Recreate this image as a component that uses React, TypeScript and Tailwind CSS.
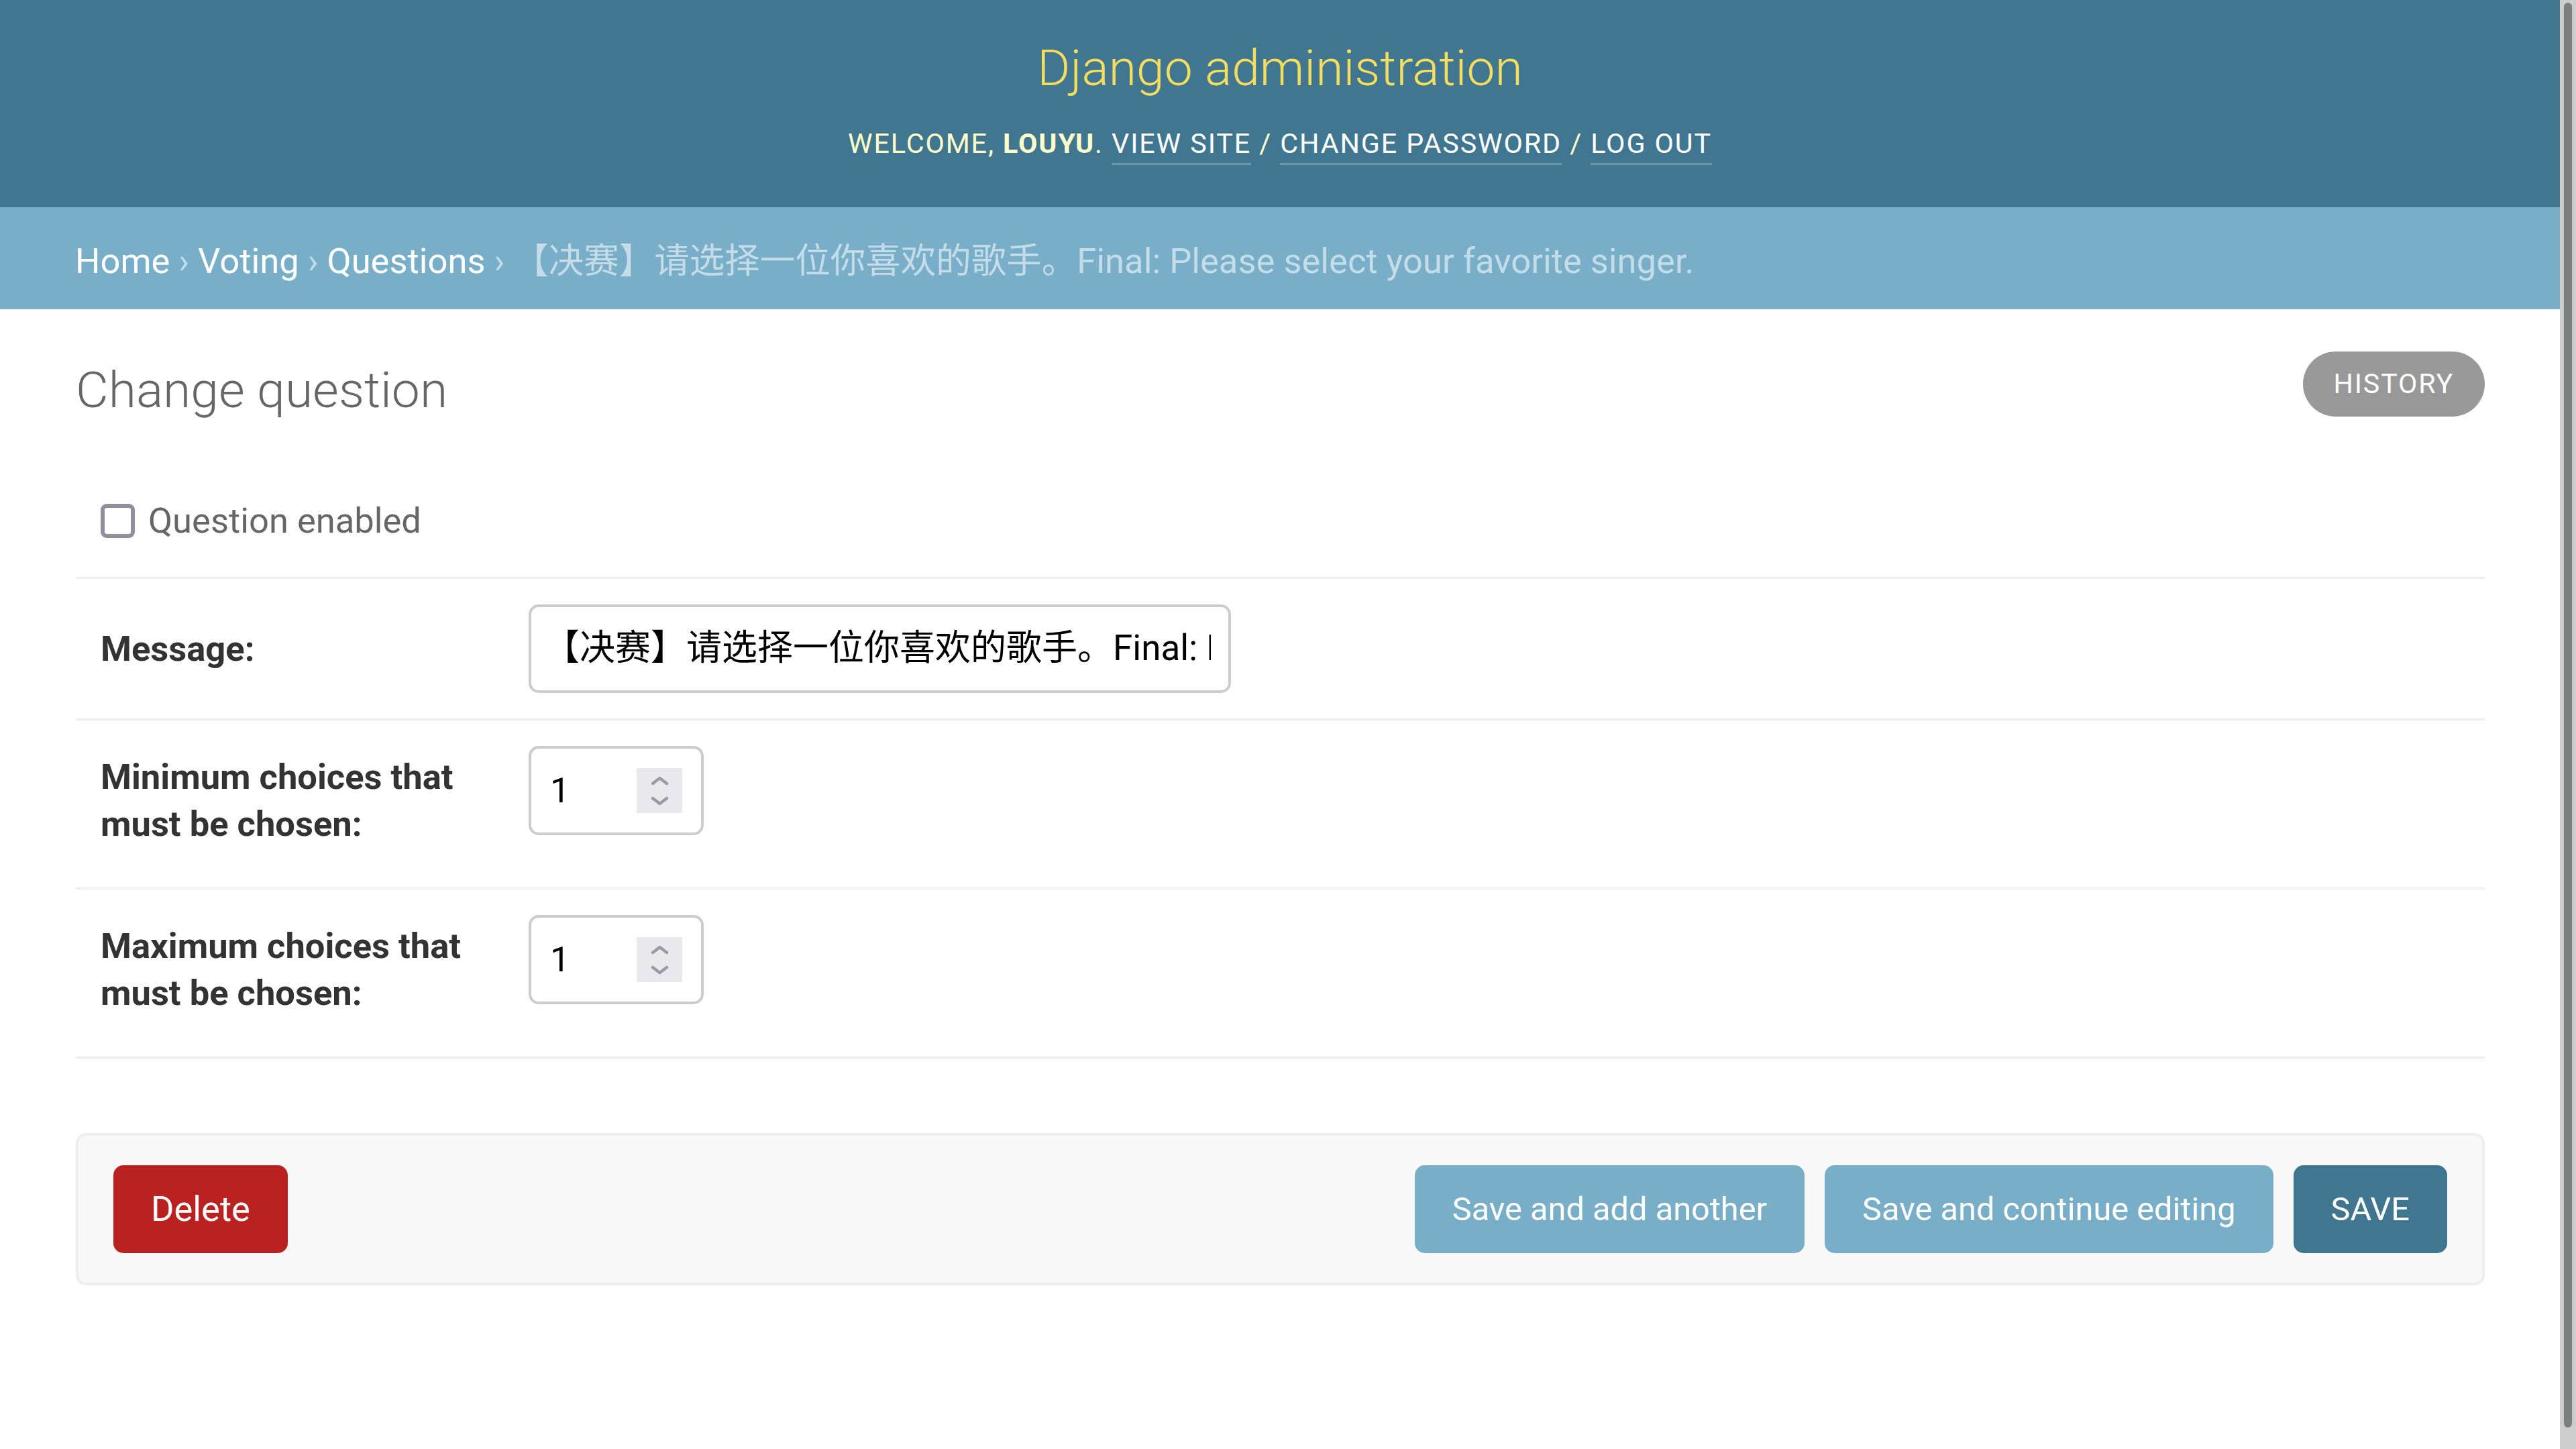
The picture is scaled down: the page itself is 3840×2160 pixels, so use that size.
import React from 'react';

const MESSAGE = '【决赛】请选择一位你喜欢的歌手。Final: Please select your favorite singer.';

function Chevron({ down }: { down?: boolean }) {
  return (
    <svg width="27" height="14" viewBox="0 0 27 14" fill="none">
      <path
        d={down ? 'M3 3L13.5 11L24 3' : 'M3 11L13.5 3L24 11'}
        stroke="#9a9aa6"
        strokeWidth="4.5"
        strokeLinecap="round"
        strokeLinejoin="round"
      />
    </svg>
  );
}

function NumberField({ value }: { value: string }) {
  return (
    <div className="flex h-[133px] w-[261px] shrink-0 items-center justify-between rounded-[15px] border-[4px] border-[#cccccc] bg-white pl-[28px] pr-[28px]">
      <span className="text-[52.5px] leading-none text-black">{value}</span>
      <div className="flex h-[67px] w-[68px] flex-col items-center justify-center gap-[16px] bg-[#e9e9ed]">
        <Chevron />
        <Chevron down />
      </div>
    </div>
  );
}

// two-line labels sit at the top of the row
function NumberRow({ label }: { label: string }) {
  return (
    <div className="flex items-start border-b-[3px] border-[#eeeeee] px-[37px] py-[38px]">
      <label className="w-[638px] shrink-0 pb-[22px] pr-[38px] pt-[11px] text-[52.5px] font-bold leading-[70px] text-[#333333]">
        {label}
      </label>
      <NumberField value="1" />
    </div>
  );
}

function Button({ children, className }: { children: React.ReactNode; className: string }) {
  return (
    <button className={`flex h-[131px] items-center rounded-[15px] px-[56px] text-white ${className}`}>
      {children}
    </button>
  );
}

export default function App() {
  return (
    <div className="flex min-h-[2160px] w-full bg-white font-['Roboto','Noto_Sans_CJK_SC',sans-serif]">
      <div className="flex min-w-0 flex-1 flex-col">
        {/* header */}
        <header className="flex flex-col items-center bg-[#417690] pb-[57px] pt-[56px]">
          <h1 className="mb-[30px] text-[75px] font-light leading-[90px] text-[#f5dd5d]">Django administration</h1>
          <div className="text-[41.25px] uppercase leading-[76px] tracking-[1.9px] text-[#ffffcc]">
            Welcome, <strong className="font-bold">louyu</strong>.{' '}
            <a className="border-b-[3px] border-white/25 pb-[5px] text-white">View site</a> /{' '}
            <a className="border-b-[3px] border-white/25 pb-[5px] text-white">Change password</a> /{' '}
            <a className="border-b-[3px] border-white/25 pb-[5px] text-white">Log out</a>
          </div>
        </header>

        {/* breadcrumbs */}
        <nav className="flex h-[152px] items-center whitespace-nowrap bg-[#79aec8] px-[112px] pt-[9px] text-[52.5px] text-[#c4dce8]">
          <a className="text-white">Home</a>&nbsp;›&nbsp;<a className="text-white">Voting</a>&nbsp;›&nbsp;
          <a className="text-white">Questions</a>&nbsp;›&nbsp;{MESSAGE}
        </nav>

        <main className="pl-[113px] pr-[112px]">
          <div className="flex h-[229px] items-start justify-between">
            <h2 className="mt-[75px] text-[75px] font-light leading-[90px] text-[#666666]">Change question</h2>
            <a className="mt-[63px] flex h-[97px] items-center rounded-full bg-[#999999] px-[46px] text-[41.25px] uppercase tracking-[1.8px] text-white">
              History
            </a>
          </div>

          <fieldset>
            <div className="flex h-[173px] items-center gap-[20px] border-b-[3px] border-[#eeeeee] px-[37px] pt-[2px]">
              <span className="h-[51px] w-[51px] rounded-[9px] border-[6px] border-[#8f8f9d] bg-white" />
              <label className="text-[52.5px] text-[#666666]">Question enabled</label>
            </div>

            <div className="flex items-center border-b-[3px] border-[#eeeeee] px-[37px] py-[38px]">
              <label className="w-[638px] shrink-0 pr-[38px] text-[52.5px] font-bold leading-[70px] text-[#333333]">
                Message:
              </label>
              <div className="flex h-[132px] w-[1047px] items-center rounded-[15px] border-[4px] border-[#cccccc] pl-[19px] pr-[26px]">
                <div className="overflow-hidden whitespace-nowrap text-[53px] text-black">{MESSAGE}</div>
              </div>
            </div>

            <NumberRow label="Minimum choices that must be chosen:" />
            <NumberRow label="Maximum choices that must be chosen:" />
          </fieldset>

          <div className="mt-[111px] flex items-center justify-between rounded-[15px] border-[4px] border-[#eeeeee] bg-[#f8f8f8] px-[52px] py-[44px]">
            <Button className="bg-[#ba2121] text-[52.5px]">Delete</Button>
            <div className="flex gap-[30px]">
              <Button className="bg-[#79aec8] text-[48.75px]">Save and add another</Button>
              <Button className="bg-[#79aec8] text-[48.75px]">Save and continue editing</Button>
              <Button className="bg-[#417690] text-[48.75px]">SAVE</Button>
            </div>
          </div>
        </main>
      </div>

      {/* browser scrollbar */}
      <div className="w-[24px] shrink-0 bg-[#cdcdcd] px-[6px] pb-[32px] pt-[4px]">
        <div className="h-full rounded-full bg-[#7b7f7f]" />
      </div>
    </div>
  );
}
